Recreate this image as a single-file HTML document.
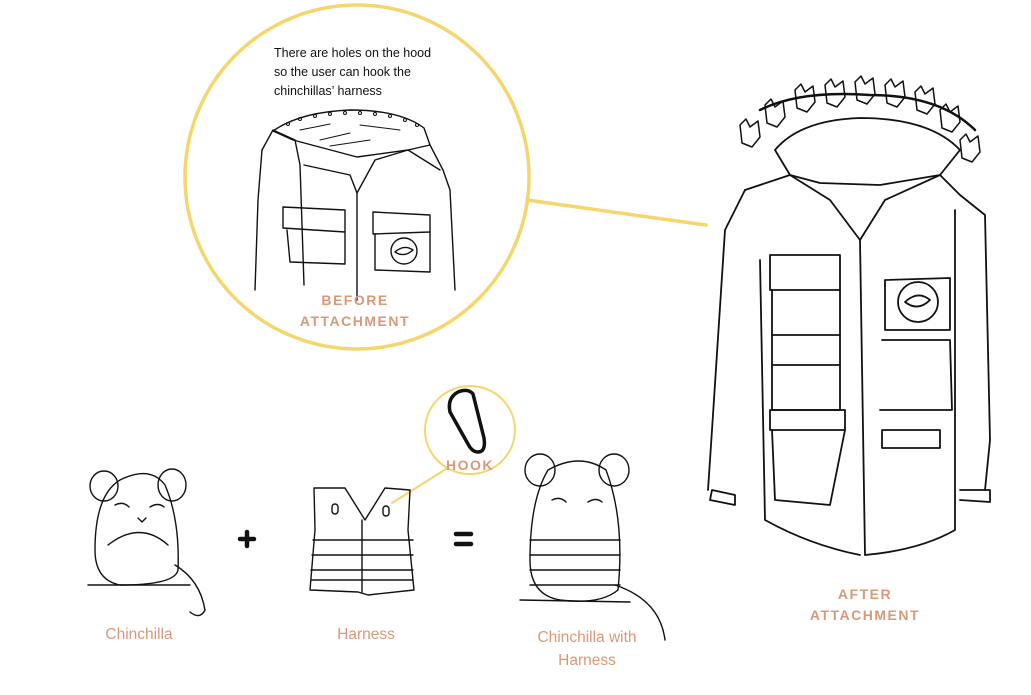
<!DOCTYPE html>
<html><head><style>
body{margin:0;background:#fff;width:1031px;height:695px;overflow:hidden;font-family:"Liberation Sans",sans-serif}
svg{position:absolute;left:0;top:0}
.t{position:absolute;color:#d99878;font-size:15.5px;text-align:center}
.b{position:absolute;color:#d99878;font-weight:bold;font-size:14px;letter-spacing:1.5px;text-align:center;line-height:21px}
</style></head><body>
<svg width="1031" height="695" viewBox="0 0 1031 695" fill="none" stroke="#111" stroke-width="1.4" stroke-linecap="round" stroke-linejoin="round">
<g stroke="#f5d66c" stroke-width="3.5">
<circle cx="357" cy="177" r="172"/>
<line x1="527" y1="200" x2="706" y2="225"/>
</g>
<g stroke="#f5d66c" stroke-width="2">
<ellipse cx="470" cy="430" rx="45" ry="44"/>
<line x1="446" y1="469" x2="392" y2="503"/>
</g>
<g>
<path d="M273 131 Q300 112 350 110 Q400 110 424 128 L430 145 L408 150 L357 157 L293 140 Z"/>
<path d="M262 150 L273 130 L295 140 L300 165 L304 285"/>
<path d="M262 150 L258 200 L255 290"/>
<path d="M304 165 L350 175 L357 193 L357 300"/>
<path d="M430 145 L443 170 L450 190 L455 290"/>
<path d="M357 193 L375 160 L408 150 L440 170"/>
<path d="M283 207 L345 210 L345 232 L283 228 Z"/>
<path d="M287 230 L290 262 L345 264 L345 232"/>
<path d="M373 212 L430 215 L430 232 L373 234 Z"/>
<path d="M375 234 L375 270 L430 272 L430 232"/>
<circle cx="404" cy="251" r="13"/>
<path d="M395 252 Q404 244 413 250 Q404 258 395 252"/>
<g stroke-width="1">
<circle cx="288" cy="124" r="1.5"/><circle cx="300" cy="119" r="1.5"/><circle cx="315" cy="116" r="1.5"/><circle cx="330" cy="114" r="1.5"/><circle cx="345" cy="113" r="1.5"/><circle cx="360" cy="113" r="1.5"/><circle cx="375" cy="114" r="1.5"/><circle cx="390" cy="116" r="1.5"/><circle cx="405" cy="120" r="1.5"/><circle cx="417" cy="125" r="1.5"/>
<path d="M300 130 L330 124 M320 140 L350 133 M330 146 L370 140 M360 125 L400 130"/>
</g>
</g>
<g stroke-width="1.8">
<path d="M775 150 Q800 120 860 118 Q930 118 960 150 L940 175 L880 185 L820 183 L790 175 Z"/>
<path d="M760 110 Q800 90 870 95 Q940 95 975 130" stroke-width="2.5"/>
<path d="M745 190 L790 175 L830 200 L860 240 L865 555"/>
<path d="M940 175 L960 195 L985 215 L990 440 L985 490"/>
<path d="M745 190 L725 230 L712 430 L708 490"/>
<path d="M860 240 L885 200 L940 175"/>
<path d="M760 260 L765 520 Q810 545 860 555"/>
<path d="M955 210 L955 530 Q920 550 865 555"/>
<path d="M770 255 L840 255 L840 290 L770 290 Z"/>
<path d="M772 290 L772 410 L840 410 L840 290"/>
<path d="M772 335 L840 335 M772 365 L840 365"/>
<path d="M770 410 L845 410 L845 430 L770 430 Z"/>
<path d="M772 430 L775 500 L830 505 L845 430"/>
<path d="M885 280 L950 278 L950 330 L885 330 Z"/>
<circle cx="918" cy="302" r="20"/>
<path d="M905 302 Q918 290 930 300 Q918 312 905 302"/>
<path d="M882 340 L950 340 L952 410 L880 410"/>
<path d="M882 430 L940 430 L940 448 L882 448 Z"/>
<path d="M712 490 L735 495 L735 505 L710 500 Z"/>
<path d="M960 490 L990 490 L990 502 L960 500"/>
<g stroke-width="1.5">
<path d="M740 125 l6 -6 l4 8 l8 -6 l2 16 l-8 10 l-10 -4 z"/>
<path d="M765 105 l6 -6 l4 8 l8 -6 l2 16 l-8 10 l-10 -4 z"/>
<path d="M795 90 l6 -6 l4 8 l8 -6 l2 16 l-8 10 l-10 -4 z"/>
<path d="M825 85 l6 -6 l4 8 l8 -6 l2 16 l-8 10 l-10 -4 z"/>
<path d="M855 82 l6 -6 l4 8 l8 -6 l2 16 l-8 10 l-10 -4 z"/>
<path d="M885 85 l6 -6 l4 8 l8 -6 l2 16 l-8 10 l-10 -4 z"/>
<path d="M915 92 l6 -6 l4 8 l8 -6 l2 16 l-8 10 l-10 -4 z"/>
<path d="M940 110 l6 -6 l4 8 l8 -6 l2 16 l-8 10 l-10 -4 z"/>
<path d="M960 140 l6 -6 l4 8 l8 -6 l2 16 l-8 10 l-10 -4 z"/>
</g>
</g>
<g>
<ellipse cx="104" cy="486" rx="14" ry="15"/><ellipse cx="172" cy="485" rx="14" ry="16"/>
<path d="M120 480 Q150 465 165 485 Q180 520 178 570 Q175 585 120 585 Q95 580 95 550 Q95 495 120 480"/>
<path d="M88 585 L190 585 M175 565 Q200 580 205 610 Q200 620 190 612"/>
<path d="M108 545 Q140 520 168 545"/>
<path d="M115 505 q8 -4 14 2 M150 507 q8 -5 14 0"/>
<path d="M138 518 l4 4 l4 -4"/>
</g>
<g stroke-width="4.5"><path d="M240 539 h14 M247 532 v14"/><path d="M456 534 h15 M456 544 h15"/></g>
<g>
<path d="M314 488 L345 488 L365 520 L385 488 L410 490 L408 530 L414 590 L368 595 L358 592 L310 590 L315 530 Z"/>
<path d="M313 540 L413 540 M312 555 L413 555 M311 570 L413 570 M311 580 L413 580"/>
<path d="M362 520 L362 592"/>
<rect x="332" y="504" width="6" height="10" rx="3"/><rect x="383" y="506" width="6" height="10" rx="3"/>
</g>
<path d="M458 392 Q468 388 473 394 L484 438 Q486 452 478 452 Q472 452 468 444 L450 412 Q447 398 458 392 Z" stroke-width="3.5"/>
<g>
<ellipse cx="540" cy="470" rx="15" ry="16"/><ellipse cx="614" cy="470" rx="15" ry="16"/>
<path d="M548 470 Q580 452 606 470 Q625 520 618 590 Q600 605 560 600 Q530 595 530 560 Q530 500 548 470"/>
<path d="M530 540 L620 540 M530 555 L620 555 M530 570 L620 570 M530 585 L620 585"/>
<path d="M520 600 L630 602 M615 585 Q660 600 665 640"/>
<path d="M552 500 q8 -4 14 2 M588 502 q8 -5 14 0"/>
</g>
</svg>
<div style="position:absolute;left:274px;top:44px;font-size:12.5px;line-height:19px;color:#111">There are holes on the hood<br>so the user can hook the<br>chinchillas’ harness</div>
<div class="b" style="left:290px;top:290px;width:130px">BEFORE<br>ATTACHMENT</div>
<div class="b" style="left:800px;top:584px;width:130px">AFTER<br>ATTACHMENT</div>
<div class="b" style="left:440px;top:455px;width:60px">HOOK</div>
<div class="t" style="left:89px;top:626px;width:100px">Chinchilla</div>
<div class="t" style="left:316px;top:626px;width:100px">Harness</div>
<div class="t" style="left:518px;top:626px;width:138px;line-height:23px">Chinchilla with<br>Harness</div>
</body></html>
